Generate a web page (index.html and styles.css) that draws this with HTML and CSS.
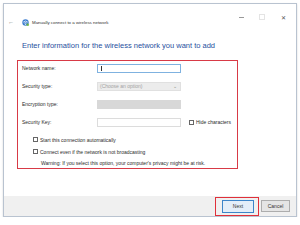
FILE: index.html
```html
<!DOCTYPE html>
<html lang="en">

<head>
    <meta charset="UTF-8" />
    <title>Manually connect to a wireless network</title>
    <link rel="stylesheet" href="styles.css">
</head>

<body>
    <div class="window">
        <div class="header">
            <div class="title">
                <span class="back">&larr;</span>
                <svg class="net-icon" width="7" height="7" viewBox="0 0 7 7">
                    <circle cx="3.5" cy="3.5" r="3.2" fill="#3f7fd0" />
                    <path d="M1.2 3.2 Q3.5 0.8 5.8 3.2" stroke="#fff" stroke-width="0.7" fill="none" />
                    <path d="M2.2 4.2 Q3.5 2.8 4.8 4.2" stroke="#fff" stroke-width="0.7" fill="none" />
                    <circle cx="3.5" cy="5.2" r="0.6" fill="#fff" />
                    <rect x="4.6" y="4.6" width="2.2" height="2.2" fill="#6cb33f" />
                </svg>
                <span class="title-text">Manually connect to a wireless network</span>
            </div>
            <div class="controls">
                <span class="ctl min"></span>
                <span class="ctl max"></span>
                <span class="ctl close">&#x2715;</span>
            </div>
        </div>

        <h1 class="heading">Enter information for the wireless network you want to add</h1>

        <div class="form-box">
            <div class="form-row">
                <label>Network name:</label>
                <span class="field active"><span class="caret"></span></span>
            </div>
            <div class="form-row">
                <label>Security type:</label>
                <span class="field select">(Choose an option)<span class="chev">&#8964;</span></span>
            </div>
            <div class="form-row">
                <label>Encryption type:</label>
                <span class="field disabled"></span>
            </div>
            <div class="form-row">
                <label>Security Key:</label>
                <span class="field"></span>
                <span class="check-inline"><span class="box"></span>Hide characters</span>
            </div>

            <div class="checks">
                <div class="check"><span class="box"></span>Start this connection automatically</div>
                <div class="check"><span class="box"></span>Connect even if the network is not broadcasting</div>
                <div class="warning">Warning: If you select this option, your computer's privacy might be at risk.</div>
            </div>
        </div>

        <div class="footer">
            <span class="highlight"><button class="btn primary">Next</button></span>
            <button class="btn">Cancel</button>
        </div>
    </div>
</body>

</html>
```

FILE: styles.css
```css
body {
    margin: 0;
    background: #ffffff;
    font-family: "Liberation Sans", Arial, sans-serif;
    color: #2b2b2b;
}

.window {
    margin: 3px 0 0 3px;
    width: 294px;
    height: 214px;
    box-sizing: border-box;
    border: 1px solid #b9c3d0;
    box-shadow: 0 1px 2px rgba(0, 0, 0, 0.15);
    display: flex;
    flex-direction: column;
}

.header {
    display: flex;
    justify-content: space-between;
    align-items: flex-start;
}

.title {
    display: flex;
    align-items: center;
    height: 8px;
    margin-top: 14px;
    padding-left: 4px;
}

.back {
    font-size: 6px;
    color: #777;
    width: 11px;
}

.net-icon {
    margin-left: 3px;
}

.title-text {
    margin-left: 3px;
    font-size: 4.4px;
    color: #333;
}

.controls {
    display: flex;
    align-items: center;
    height: 8px;
    margin-top: 9px;
    padding-right: 9px;
}

.ctl {
    width: 7px;
    height: 7px;
    display: flex;
    align-items: center;
    justify-content: center;
}

.min {
    margin-right: 13px;
}

.min::after {
    content: "";
    width: 5px;
    height: 1px;
    background: #999;
}

.max {
    margin-right: 15px;
}

.max::after {
    content: "";
    width: 4px;
    height: 4px;
    border: 1px solid #e4e4e4;
}

.close {
    font-size: 6px;
    color: #555;
}

.heading {
    margin: 15px 0 0 18px;
    font-size: 7.5px;
    line-height: 9px;
    font-weight: normal;
    color: #1f4f9e;
}

.form-box {
    margin: 10px 0 0 13px;
    width: 221px;
    height: 109px;
    box-sizing: border-box;
    border: 1px solid #d83a46;
    padding: 2px 0 0 4px;
}

.form-row {
    display: flex;
    align-items: center;
    height: 10px;
    margin-bottom: 8px;
    font-size: 5px;
}

.form-row label {
    width: 75px;
}

.field {
    width: 84px;
    height: 9px;
    box-sizing: border-box;
    border: 1px solid #dcdcdc;
    background: #fff;
    display: flex;
    align-items: center;
}

.field.active {
    border-color: #7fb2e0;
}

.caret {
    width: 1px;
    height: 5px;
    background: #333;
    margin-left: 3px;
}

.field.select {
    background: #ececec;
    border-color: #e0e0e0;
    color: #a3a3a3;
    padding-left: 2px;
    justify-content: space-between;
}

.chev {
    font-size: 5px;
    color: #888;
    margin-right: 3px;
    line-height: 3px;
}

.field.disabled {
    background: #d8d8d8;
    border-color: #d8d8d8;
}

.check-inline {
    display: flex;
    align-items: center;
    margin-left: 8px;
    white-space: nowrap;
}

.box {
    width: 5px;
    height: 5px;
    box-sizing: border-box;
    border: 1px solid #666;
    background: #fff;
    margin-right: 2px;
}

.checks {
    margin-left: 11px;
    margin-top: 9px;
    font-size: 5px;
}

.check {
    display: flex;
    align-items: center;
    height: 7px;
    margin-bottom: 5px;
}

.warning {
    margin-left: 8px;
    line-height: 6px;
}

.footer {
    margin-top: auto;
    height: 20px;
    background: #f0f0f0;
    display: flex;
    align-items: center;
    justify-content: flex-end;
    padding-right: 6px;
}

.highlight {
    border: 1px solid #e0303a;
    padding: 2px 4px 2px 6px;
    margin-right: 2px;
    display: flex;
}

.btn {
    font-family: "Liberation Sans", Arial, sans-serif;
    font-size: 5px;
    width: 29px;
    height: 12px;
    padding: 0;
    border: 1px solid #adadad;
    background: #e5e5e5;
    color: #333;
}

.btn.primary {
    width: 32px;
    height: 13px;
    border-color: #3c85c9;
    background: #e3eef9;
}
```
